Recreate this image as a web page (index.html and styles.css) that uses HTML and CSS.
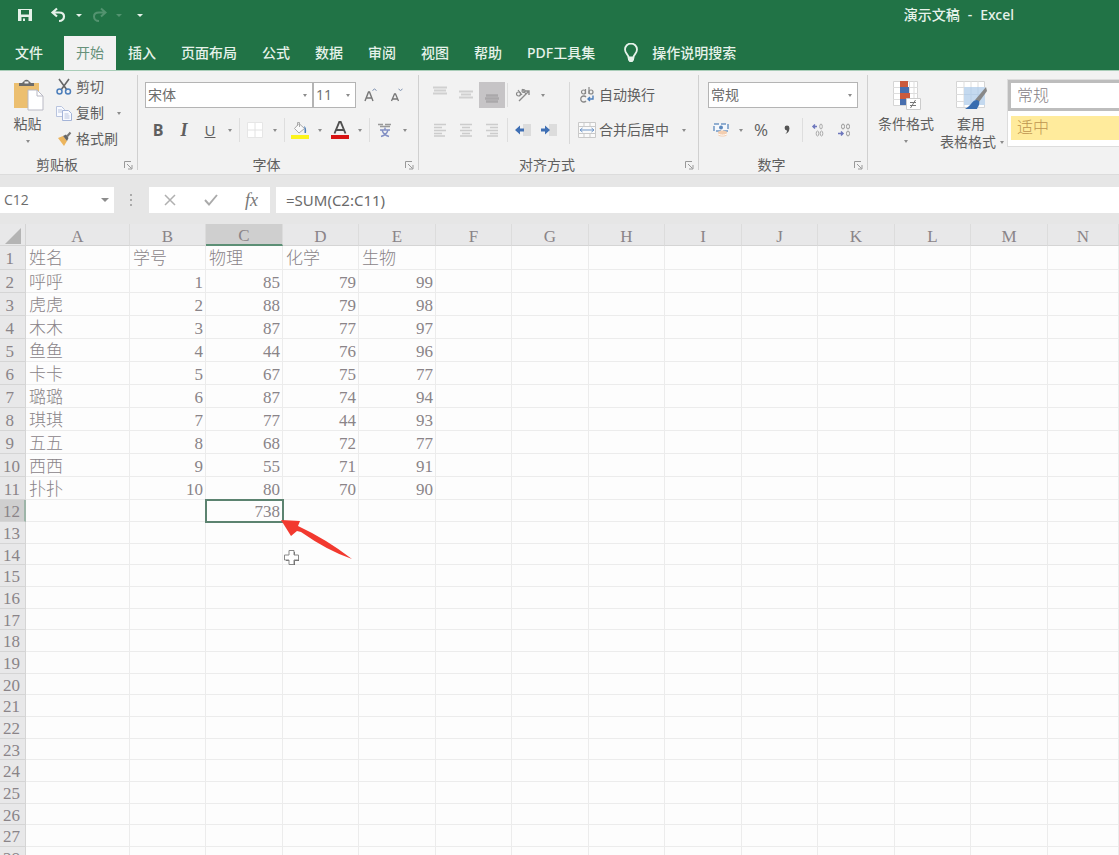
FILE: index.html
```html
<!DOCTYPE html>
<html lang="zh-CN">
<head>
<meta charset="utf-8">
<title>演示文稿 - Excel</title>
<link rel="stylesheet" href="styles.css">
</head>
<body>
<header class="top">
  <div class="titlebar">
    <button class="qat" aria-label="保存"><svg width="16" height="16" viewBox="0 0 16 16"><path d="M1 2h14v12H1z" fill="#e6f2ea"/><path d="M4 3h8v4.500H4zM4.500 10h7v4h-7z" fill="#217346"/><path d="M6 11.500h2V14H6z" fill="#e6f2ea"/></svg></button>
    <button class="qat undo" aria-label="撤消"><svg width="16" height="16" viewBox="0 0 16 16"><path d="M7 1.500L2.500 5.500 7 9.500M3 5.500h6c3 0 5 1.500 5 4s-2 4.500-5 4.500" fill="none" stroke="#e6f2ea" stroke-width="2.200"/></svg></button>
    <button class="drop light" aria-label="撤消选项"></button>
    <button class="qat dim" aria-label="恢复"><svg width="16" height="16" viewBox="0 0 16 16"><path d="M9 1.500l4.500 4L9 9.500M13 5.500H7c-3 0-5 1.500-5 4S4 14 7 14" fill="none" stroke="#e6f2ea" stroke-width="2"/></svg></button>
    <button class="drop light dim" aria-label="恢复选项"></button>
    <button class="drop light more" aria-label="自定义快速访问工具栏"></button>
    <h1 class="title"><span>演示文稿</span><span>-</span><span>Excel</span></h1>
  </div>
  <nav class="tabs">
    <button class="tab file">文件</button>
    <button class="tab active">开始</button>
    <button class="tab">插入</button>
    <button class="tab">页面布局</button>
    <button class="tab">公式</button>
    <button class="tab">数据</button>
    <button class="tab">审阅</button>
    <button class="tab">视图</button>
    <button class="tab">帮助</button>
    <button class="tab">PDF工具集</button>
    <button class="tab tell"><svg width="16" height="20" viewBox="0 0 16 20"><path d="M5.500 14.500c0-3-3.500-4-3.500-8a6 6 0 0 1 12 0c0 4-3.500 5-3.500 8z" fill="none" stroke="#e6f2ea" stroke-width="1.800"/><path d="M5 14h6v3l-1.500 2h-3L5 17z" fill="#e6f2ea"/></svg>操作说明搜索</button>
  </nav>
</header>

<section class="ribbon" aria-label="开始">
  <div class="group clipboard">
    <div class="content">
      <button class="big paste"><svg width="32" height="34" viewBox="0 0 32 34"><path d="M2 5h25v25H2z" fill="#ecbf70"/><path d="M7 8V5h3l2-2a3 3 0 0 1 5 0l2 2h3v3z" fill="#6b6b6b"/><path d="M12.500 3.500h4v2h-4z" fill="#f2f2f2"/><path d="M16 12h9l6 6v14H16z" fill="#fff" stroke="#b9b9c4"/><path d="M25 12v6h6" fill="none" stroke="#b9b9c4"/></svg><span>粘贴</span><i class="caret"></i></button>
      <div class="stack">
        <button class="line"><svg width="18" height="18" viewBox="0 0 18 18"><path d="M4 1l8 11M14 1L6 12" stroke="#666" stroke-width="1.600"/><circle cx="4.500" cy="13.500" r="2.500" fill="none" stroke="#4c7ebb" stroke-width="1.500"/><circle cx="13" cy="13.500" r="2.500" fill="none" stroke="#4c7ebb" stroke-width="1.500"/></svg>剪切</button>
        <button class="line"><svg width="18" height="18" viewBox="0 0 18 18"><path d="M1.500 2.500h5l3 3v7h-8z" fill="#f8faff" stroke="#b9c4de"/><path d="M7.500 6.500h6l3 3v7h-9z" fill="#f8faff" stroke="#a4b4d8"/><path d="M3 6h4M3 8h4M9.500 10h4M9.500 12h5M9.500 14h5" stroke="#b9c4de"/></svg>复制<i class="caret"></i></button>
        <button class="line"><svg width="18" height="18" viewBox="0 0 18 18"><path d="M3 8l5-2 4 5-3 5z" fill="#ecb55e"/><path d="M8 6l3-1.500L13.500 8 12 11z" fill="#666"/><path d="M12 6.500l3.500-4" stroke="#777" stroke-width="2"/></svg>格式刷</button>
      </div>
    </div>
    <div class="label"><span>剪贴板</span><button class="launch" aria-label="剪贴板设置"><svg width="9" height="9" viewBox="0 0 9 9"><path d="M.5 7V.5H7M3 3l4.500 4.500M8 4v4H4" fill="none" stroke="#999"/></svg></button></div>
  </div>

  <div class="group font">
    <div class="content rows">
      <div class="row">
        <label class="pick family"><select aria-label="字体"><option>宋体</option></select></label>
        <label class="pick size"><select aria-label="字号"><option>11</option></select></label>
        <button class="tool grow" aria-label="增大字号"><svg width="14" height="16" viewBox="0 0 14 16"><path d="M1 14L4.500 5h1L9 14M2.500 11h5" fill="none" stroke="#777" stroke-width="1.400"/><path d="M8.500 3.500L10.500 2l2 1.500" fill="none" stroke="#7b8fae"/></svg></button>
        <button class="tool" aria-label="减小字号"><svg width="14" height="16" viewBox="0 0 14 16"><path d="M1.500 14L4.500 7h1l3 7M2.500 12h5" fill="none" stroke="#777" stroke-width="1.300"/><path d="M8.500 2l2 1.500 2-1.500" fill="none" stroke="#7b8fae"/></svg></button>
      </div>
      <div class="row">
        <button class="tool bold">B</button><button class="tool italic">I</button><button class="tool under">U</button><button class="drop" aria-label="下划线选项"></button>
        <i class="sep"></i>
        <button class="tool" aria-label="边框"><svg width="16" height="16" viewBox="0 0 16 16"><path d="M.5 .5h15v15H.5z" fill="#fff" stroke="#e6e6e6"/><path d="M8 1v14M1 8h14" stroke="#e2e2e2"/></svg></button><button class="drop" aria-label="边框选项"></button>
        <i class="sep"></i>
        <button class="tool" aria-label="填充颜色"><svg width="18" height="18" viewBox="0 0 18 18"><path d="M0 14h18v4H0z" fill="#fcf41c"/><path d="M8 2.500l5.500 5L8 12 3.500 7.500z" fill="#fafafa" stroke="#aaa"/><path d="M6.500 5V1.500h2V6" fill="none" stroke="#aaa"/><path d="M13 5c2 1 2.500 3 2 7h-1.500V7z" fill="#5080b8"/></svg></button><button class="drop" aria-label="填充颜色选项"></button>
        <button class="tool" aria-label="字体颜色"><svg width="18" height="18" viewBox="0 0 18 18"><path d="M0 14h18v4H0z" fill="#d81414"/><path d="M3.500 12.500L8.300 1h1.400l4.800 11.500M5.500 9h7" fill="none" stroke="#505050" stroke-width="1.900"/></svg></button><button class="drop" aria-label="字体颜色选项"></button>
        <i class="sep"></i>
        <button class="tool" aria-label="拼音指南"><svg width="16" height="16" viewBox="0 0 16 16"><path d="M1 2.500h5M8 2.500h6M3 4.500h10" stroke="#999" stroke-width="1.300"/><path d="M8 5.500v2M3 8h10M5 8c1 3.500 3.500 5.500 7 6.500M11 8c-1 3.500-3.500 5.500-7 6.500" fill="none" stroke="#8390c4" stroke-width="1.400"/></svg></button><button class="drop" aria-label="拼音指南选项"></button>
      </div>
    </div>
    <div class="label"><span>字体</span><button class="launch" aria-label="字体设置"><svg width="9" height="9" viewBox="0 0 9 9"><path d="M.5 7V.5H7M3 3l4.500 4.500M8 4v4H4" fill="none" stroke="#999"/></svg></button></div>
  </div>

  <div class="group align">
    <div class="content">
      <div class="rows">
        <div class="row">
          <button class="tool" aria-label="顶端对齐"><svg width="14" height="18" viewBox="0 0 14 18"><path d="M0 1.500h14M1 4.500h12M0 7.500h14" stroke="#d0d0d0" stroke-width="2"/></svg></button>
          <button class="tool" aria-label="垂直居中"><svg width="14" height="18" viewBox="0 0 14 18"><path d="M0 5.500h14M2 8.500h10M0 11.500h14" stroke="#d0d0d0" stroke-width="2"/></svg></button>
          <button class="tool pressed" aria-label="底端对齐"><svg width="14" height="18" viewBox="0 0 14 18"><path d="M1 9.500h12M0 12.500h14M1 15.500h12" stroke="#aaa8aa" stroke-width="2.500"/></svg></button>
          <i class="sep"></i>
          <button class="tool" aria-label="方向"><svg width="18" height="16" viewBox="0 0 18 16"><path d="M5 14L15 4M11 4h4v4" fill="none" stroke="#8b8b8b" stroke-width="1.400"/><circle cx="4.500" cy="7" r="2" fill="none" stroke="#888" stroke-width="1.200"/><path d="M4 3l4 5M8 2l4 5" stroke="#888" stroke-width="1.200"/><circle cx="9.500" cy="4" r="1.500" fill="none" stroke="#888" stroke-width="1.200"/></svg></button><button class="drop" aria-label="方向选项"></button>
        </div>
        <div class="row">
          <button class="tool" aria-label="左对齐"><svg width="14" height="14" viewBox="0 0 14 14"><path d="M1 1.500h12M1 4.500h8M1 7.500h12M1 10.500h8M1 13h11" stroke="#ccc" stroke-width="1.500"/></svg></button>
          <button class="tool" aria-label="居中"><svg width="14" height="14" viewBox="0 0 14 14"><path d="M1 1.500h12M3 4.500h8M1 7.500h12M3 10.500h8M1 13h12" stroke="#ccc" stroke-width="1.500"/></svg></button>
          <button class="tool" aria-label="右对齐"><svg width="14" height="14" viewBox="0 0 14 14"><path d="M1 1.500h12M5 4.500h8M1 7.500h12M5 10.500h8M2 13h11" stroke="#ccc" stroke-width="1.500"/></svg></button>
          <i class="sep"></i>
          <button class="tool" aria-label="减少缩进量"><svg width="16" height="14" viewBox="0 0 16 14"><path d="M8 1h8v12H8z" fill="#dcdcdc"/><path d="M0 7l5-4.500V5.500h4v3H5v3z" fill="#3f6fb4"/></svg></button>
          <button class="tool" aria-label="增加缩进量"><svg width="16" height="14" viewBox="0 0 16 14"><path d="M8 1h8v12H8z" fill="#dcdcdc"/><path d="M9 7L4 2.500V5.500H0v3h4v3z" fill="#3f6fb4"/></svg></button>
        </div>
      </div>
      <i class="divider"></i>
      <div class="rows">
        <button class="row line"><svg width="18" height="18" viewBox="0 0 18 18"><path d="M7.500 3v5M11 1v7" stroke="#888" stroke-width="1.200"/><circle cx="5.500" cy="6" r="2" fill="none" stroke="#888" stroke-width="1.200"/><circle cx="13" cy="6" r="2" fill="none" stroke="#888" stroke-width="1.200"/><path d="M8 11a3 3 0 1 0 0 4" fill="none" stroke="#888" stroke-width="1.300"/><path d="M15 9.500V13h-5M12 11l-2 2 2 2" fill="none" stroke="#4c7ebb" stroke-width="1.400"/></svg>自动换行</button>
        <button class="row line"><svg width="18" height="18" viewBox="0 0 18 18"><path d="M.5 1.500h17v15H.5zM1 5.500h16M1 12.500h16M6 2v3M12 2v3M6 13v3M12 13v3" fill="#fafafa" stroke="#c9c9c9"/><path d="M2 9h14M4.500 7L2 9l2.500 2M13.500 7L16 9l-2.500 2" fill="none" stroke="#6d95c8"/></svg>合并后居中<i class="caret"></i></button>
      </div>
    </div>
    <div class="label"><span>对齐方式</span><button class="launch" aria-label="对齐设置"><svg width="9" height="9" viewBox="0 0 9 9"><path d="M.5 7V.5H7M3 3l4.500 4.500M8 4v4H4" fill="none" stroke="#999"/></svg></button></div>
  </div>

  <div class="group number">
    <div class="content rows">
      <div class="row"><label class="pick format"><select aria-label="数字格式"><option>常规</option></select></label></div>
      <div class="row">
        <button class="tool" aria-label="会计数字格式"><svg width="16" height="16" viewBox="0 0 16 16"><path d="M1 2h14v7H1z" fill="#f5f8fc" stroke="#7097c4" stroke-width="1.500" stroke-dasharray="5 2"/><circle cx="8" cy="5.500" r="2" fill="#5d89bd"/><path d="M5 10c2-2 7-2 9 0v3c-2 2-7 2-9 0z" fill="#f3ceb0"/><path d="M5 12c3 1.500 6 1.500 9 0" fill="none" stroke="#fff"/></svg></button><button class="drop" aria-label="会计数字格式选项"></button>
        <button class="tool percent">%</button>
        <button class="tool" aria-label="千位分隔样式"><svg width="8" height="12" viewBox="0 0 8 12"><circle cx="4" cy="4" r="2.400" fill="#555"/><path d="M6.300 4c.3 3-1 5-4 6 1.500-1.500 2-2.500 1.500-4z" fill="#555"/></svg></button>
        <i class="sep"></i>
        <button class="tool" aria-label="增加小数位数"><svg width="14" height="14" viewBox="0 0 14 14"><path d="M6 3.500H2M4 1.500l-2 2 2 2" fill="none" stroke="#6e77bd" stroke-width="1.500"/><g fill="none" stroke="#aaa"><ellipse cx="10" cy="3.500" rx="1.300" ry="2.500"/><ellipse cx="6.500" cy="10.500" rx="1.300" ry="2.500"/><ellipse cx="10.500" cy="10.500" rx="1.300" ry="2.500"/></g></svg></button>
        <button class="tool" aria-label="减少小数位数"><svg width="14" height="14" viewBox="0 0 14 14"><path d="M1 10.500h5M4 8.500l2 2-2 2" fill="none" stroke="#6e77bd" stroke-width="1.500"/><g fill="none" stroke="#999"><ellipse cx="6" cy="3.500" rx="1.500" ry="2.500"/><ellipse cx="11" cy="3.500" rx="1.500" ry="2.500"/><ellipse cx="11" cy="10.500" rx="1.500" ry="2.500"/></g></svg></button>
      </div>
    </div>
    <div class="label"><span>数字</span><button class="launch" aria-label="数字设置"><svg width="9" height="9" viewBox="0 0 9 9"><path d="M.5 7V.5H7M3 3l4.500 4.500M8 4v4H4" fill="none" stroke="#999"/></svg></button></div>
  </div>

  <div class="group styles">
    <div class="content">
      <button class="big"><svg width="32" height="34" viewBox="0 0 32 34"><path d="M3.500 3.500h24v24h-24z" fill="#fff" stroke="#d5d5d5"/><path d="M3 9.500h25M3 15.500h25M3 21.500h25M19.500 3v25M24 3v25" stroke="#ddd"/><path d="M10 3h8v6h-8zM10 15h10v6H10z" fill="#cb5b3d"/><path d="M10 9h9v6h-9zM10 21h6v6h-6z" fill="#486fae"/><path d="M16.500 20.500h14v11h-14z" fill="#fff" stroke="#ccc"/><path d="M20 24.500h6M20 27.500h6M25.500 22l-5 8" stroke="#777"/></svg><span>条件格式</span><i class="caret"></i></button>
      <button class="big table"><svg width="34" height="34" viewBox="0 0 34 34"><path d="M2.500 3.500h28v26h-28z" fill="#fff" stroke="#d5d5d5"/><path d="M2 9.500h28M2 16.500h28M2 23.500h28M10 3v26M17 3v26M24 3v26" stroke="#ddd"/><path d="M10 9h21v18H10z" fill="#c4d9ef"/><path d="M10 16.500h21M17 9v18M24 9v18" stroke="#b8cfe7"/><path d="M32 9l1 4-8 11-4-2z" fill="#888"/><path d="M23 22c-5 0-5 5-12 9h12c1-3 3-4 2-8z" fill="#386db0"/></svg><span>套用</span><span class="tail">表格格式<i class="caret"></i></span></button>
      <div class="gallery">
        <button class="style normal">常规</button>
        <button class="style neutral">适中</button>
      </div>
    </div>
  </div>
</section>

<section class="formula">
  <label class="name pick"><select aria-label="名称框"><option>C12</option></select></label>
  <svg class="dots" width="4" height="14" viewBox="0 0 4 14"><path d="M1 1h2v2H1zM1 6h2v2H1zM1 11h2v2H1z" fill="#aaa"/></svg>
  <div class="actions">
    <button aria-label="取消"><svg width="12" height="12" viewBox="0 0 12 12"><path d="M1 1l10 10M11 1L1 11" stroke="#b0b0b0" stroke-width="1.500"/></svg></button>
    <button aria-label="输入"><svg width="14" height="12" viewBox="0 0 14 12"><path d="M1 6l4 4.500L13 1" fill="none" stroke="#aaa" stroke-width="1.900"/></svg></button>
    <button class="fx" aria-label="插入函数">fx</button>
  </div>
  <input class="entry" aria-label="编辑栏" value="=SUM(C2:C11)">
</section>

<main class="sheet">
  <table class="grid">
    <colgroup id="cols"></colgroup>
    <thead><tr id="heads"></tr></thead>
    <tbody id="body"></tbody>
  </table>
</main>
<template id="overlay">
  <svg class="arrow" width="76" height="44" viewBox="0 0 76 44"><path d="M1 1l19 1-2 5Q46 20 72 40 48 32 21 13l-4-1-6 5z" fill="#f2392f"/></svg>
  <svg class="pointer" width="18" height="18" viewBox="0 0 18 18"><path d="M7 3h5v4h4v5h-4v4H7v-4H3V7h4z" fill="#666"/><path d="M6 1.500h5v4.500h4.500v5H11v4.500H6V11H1.500V6H6z" fill="#fff" stroke="#888"/></svg>
</template>
<script src="sheet.js"></script>
</body>
</html>
```
FILE: styles.css
```css
* { box-sizing: border-box; }
body {
  margin: 0;
  height: 100vh;
  overflow: hidden;
  display: flex;
  flex-direction: column;
  background: #e6e6e6;
  color: #5f5f5f;
  font: 14px/18px "Open Sans", "Noto Sans CJK SC", sans-serif;
}
button {
  display: inline-flex;
  align-items: center;
  justify-content: center;
  padding: 0;
  border: 0;
  background: none;
  color: inherit;
  font: inherit;
  white-space: nowrap;
}
svg { flex: none; display: block; }

/* Title bar and tabs */
.top { background: #217346; color: #e6f2ea; }
.titlebar { display: flex; align-items: center; height: 36px; padding: 0 105px 6px 17px; }
.qat { width: 16px; height: 16px; }
.undo { margin-left: 17px; }
.dim { opacity: .25; }
.title {
  display: flex;
  gap: 8px;
  margin: 0 0 0 auto;
  font-family: "Noto Sans", "Noto Sans CJK SC", sans-serif;
  font-size: 14px;
  font-weight: 500;
}
.tabs { display: flex; height: 34px; font-family: "Noto Sans", "Noto Sans CJK SC", sans-serif; }
.tab { padding: 0 13px 0 12px; font-weight: 500; }
.tab.file { padding: 0 20px 0 15px; }
.tab.active { padding: 0 12px; margin: 0 0 0 1px; background: #f2f2f2; color: #67917a; font-weight: 400; }
.tab.tell { gap: 13px; padding-left: 15px; }

.drop { width: 14px; height: 26px; }
.drop::before, .caret {
  content: "";
  width: 0;
  height: 0;
  border: 2px solid transparent;
  border-top: 3px solid #8c8c8c;
  border-bottom-width: 0;
}
.drop.light { width: 26px; }
.drop.light.dim { width: 22px; }
.drop.light::before { border-width: 3px 3px 0; border-top-color: #e6f2ea; }
.drop.more { width: 20px; }

/* Ribbon */
.ribbon {
  display: flex;
  border-top: 1px solid #a9cdb8;
  background: #f2f2f2;
  border-bottom: 1px solid #dcdcdc;
  height: 105px;
}
.group {
  flex: none;
  display: grid;
  grid-template-rows: 1fr 18px;
  position: relative;
}
.group:not(.styles)::after {
  content: "";
  position: absolute;
  right: 0;
  top: 4px;
  bottom: 4px;
  width: 1px;
  background: #d0d0d0;
}
.content { display: flex; min-width: 0; }
.rows { display: flex; flex-direction: column; gap: 9px; padding-top: 11px; }
.row { display: flex; align-items: center; height: 26px; }
.label { display: grid; grid-template-columns: 1fr 20px; column-gap: 4px; }
.label span { text-align: center; }
.launch { justify-self: center; }
.clipboard { width: 138px; }
.font { width: 281px; }
.align { width: 280px; }
.number { width: 169px; }
.styles { flex: 1; min-width: 0; }
.font .content { padding-left: 7px; }
.align .content { padding-left: 8px; }
.number .content { padding-left: 9px; }

.big {
  flex-direction: column;
  justify-content: flex-start;
  padding-top: 7px;
  line-height: 18px;
}
.big svg { margin-bottom: 3px; }
.big > .caret { margin-top: 7px; }
.paste { width: 55px; }
.stack { display: flex; flex-direction: column; padding-top: 3px; }
.line { height: 26px; gap: 3px; justify-content: flex-start; }
.line .caret { margin-left: 10px; }

.tool { width: 26px; height: 26px; font-size: 15px; }
.pressed { background: #c6c4c6; }
.grow { margin-left: 2px; }
.bold { font-weight: 700; font-size: 16px; }
.italic { font-family: "Liberation Serif", serif; font-style: italic; font-weight: 700; font-size: 18px; }
.under { text-decoration: underline; }
.percent { font-size: 17px; }
.sep { width: 1px; height: 24px; margin: 0 2px; background: #dedede; }
.divider { width: 1px; margin: 11px 8px 11px 7px; height: 62px; background: #d8d8d8; }

.pick { position: relative; display: block; height: 26px; }
.pick::after {
  content: "";
  position: absolute;
  right: 6px;
  top: 12px;
  border: 2px solid transparent;
  border-top: 3px solid #8c8c8c;
  border-bottom-width: 0;
  pointer-events: none;
}
.pick select {
  appearance: none;
  width: 100%;
  height: 100%;
  padding: 0 2px;
  border: 1px solid #b4b4b4;
  border-radius: 0;
  background: #fff;
  color: #6c6c6c;
  font: inherit;
}
.family { width: 168px; }
.size { width: 43px; }
.format { width: 150px; }

.styles .content { padding-left: 10px; grid-row: 1 / 3; }
.styles .big { width: 56px; }
.styles .table { width: 66px; margin-left: 4px; }
.tail { display: flex; align-items: center; gap: 4px; padding-left: 2px; }
.gallery {
  flex: 1;
  align-self: flex-start;
  display: flex;
  flex-direction: column;
  gap: 5px;
  margin: 8px 0 0 3px;
  padding-bottom: 6px;
  border: 1px solid #ddd;
  border-right: 0;
  background: #fff;
}
.style {
  justify-content: flex-start;
  padding: 0 6px;
  color: #858085;
  font-size: 16px;
  font-weight: 300;
}
.normal { height: 31px; border: 3px solid #bdbdbd; border-right: 0; padding-bottom: 1px; }
.neutral { height: 24px; margin-left: 3px; padding: 0 6px 2px; background: #ffeb9c; color: #bd944f; }

/* Formula bar */
.formula { display: flex; align-items: center; padding: 12px 0 11px; }
.name { width: 114px; }
.name::after { right: 5px; border-width: 4px 4px 0; top: 11px; }
.name select { border: 0; padding: 0 4px; }
.dots { margin: 0 16px 0 15px; }
.actions {
  display: grid;
  grid-template-columns: repeat(3, 41px);
  width: 121px;
  height: 26px;
  overflow: hidden;
  background: #fff;
}
.fx { font: italic 18px/20px "Liberation Serif", serif; color: #777; }
.entry {
  flex: 1;
  min-width: 0;
  height: 26px;
  margin-left: 6px;
  padding: 0 10px;
  border: 0;
  background: #fff;
  color: #6a6a6a;
  font: 15px/20px "Noto Sans", sans-serif;
}

/* Worksheet */
.sheet { flex: 1; min-height: 0; overflow: hidden; background: #fdfdfd; }
.grid {
  width: 100%;
  table-layout: fixed;
  border-collapse: separate;
  border-spacing: 0;
  color: #8a8488;
  font: 300 17px/17px "Liberation Serif", "Noto Sans CJK SC", serif;
}
.grid th, .grid td {
  padding: 2px 3px 0 3px;
  border: solid #ececec;
  border-width: 0 1px 1px 0;
  font-weight: 300;
  white-space: nowrap;
}
.grid tr { height: 22px; }
.grid tbody tr:nth-child(-n+11) { height: 23px; }
.grid tbody tr:first-child { height: 24px; }
.grid tbody tr:nth-child(n+14):nth-child(3n+2) { height: 21px; }
.grid th, .grid .corner { background: #e8e8e9; border-color: #d5d5d5; }
.grid thead th { padding-top: 3px; border-right-color: #dcdcdc; }
.grid tbody th { padding: 2px 5px 0 0; text-align: right; }
.grid tbody .one { padding-right: 11px; }
.grid thead .on { background: #cfcfcf; border-bottom: 2px solid #5c8f75; }
.grid tbody .on { padding-right: 4px; background: #cfcfcf; border-right: 2px solid #9db5a8; }
.grid td { text-align: left; }
.grid .num { padding-right: 2px; text-align: right; }
.grid .picked { position: relative; overflow: visible; outline: 2px solid #5c8370; outline-offset: -1px; }
.corner svg { margin-left: auto; }
.gw { width: 26px; }
.aw { width: 104px; }
.w { width: 76px; }
.w.odd { width: 77px; }
.arrow { position: absolute; left: 74px; top: 19px; }
.pointer { position: absolute; left: 77px; top: 49px; }
```
FILE: sheet.js
```js
const names = ["呼呼", "虎虎", "木木", "鱼鱼", "卡卡", "璐璐", "琪琪", "五五", "西西", "扑扑"];
const physics = [85, 88, 87, 44, 67, 87, 77, 68, 55, 80];
const chemistry = [79, 79, 77, 76, 75, 74, 44, 72, 71, 70];
const biology = [99, 98, 97, 96, 77, 94, 93, 77, 91, 90];

const rows = [["姓名", "学号", "物理", "化学", "生物"]];
names.forEach((name, i) => rows.push([name, i + 1, physics[i], chemistry[i], biology[i]]));
rows.push(["", "", physics.reduce((a, b) => a + b, 0)]);

const letters = "ABCDEFGHIJKLMN".split("");
document.getElementById("cols").innerHTML =
  '<col class="gw"><col class="aw">' +
  letters.slice(1, -1).map((l, i) => `<col class="w${i % 2 ? " odd" : ""}">`).join("") + "<col>";

document.getElementById("heads").innerHTML =
  '<td class="corner"><svg width="18" height="18" viewBox="0 0 18 18"><path d="M17 1v16H1z" fill="#b4b4b4"/></svg></td>' +
  letters.map(l => `<th scope="col"${l === "C" ? ' class="on"' : ""}>${l}</th>`).join("");

let html = "";
for (let r = 0; r < 28; r++) {
  const cls = [r === 11 ? "on" : "", r < 9 ? "one" : ""].join(" ").trim();
  html += `<tr><th scope="row"${cls ? ` class="${cls}"` : ""}>${r + 1}</th>`;
  for (let c = 0; c < letters.length; c++) {
    const v = (rows[r] || [])[c] ?? "";
    const picked = r === 11 && c === 2;
    const k = [typeof v === "number" ? "num" : "", picked ? "picked" : ""].join(" ").trim();
    html += `<td${k ? ` class="${k}"` : ""}>${v}${picked ? document.getElementById("overlay").innerHTML : ""}</td>`;
  }
  html += "</tr>";
}
document.getElementById("body").innerHTML = html;
```
